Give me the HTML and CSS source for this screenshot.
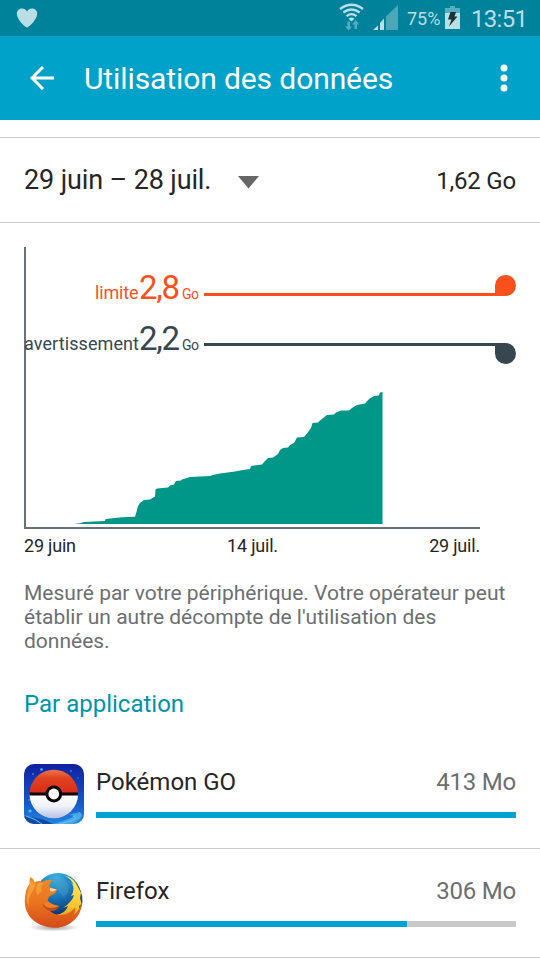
FILE: index.html
```html
<!DOCTYPE html>
<html lang="fr">
<head>
<meta charset="utf-8">
<title>Utilisation des données</title>
<link rel="stylesheet" href="styles.css">
</head>
<body>
<div class="status">
  <svg class="heart" width="22" height="20" viewBox="0 0 22 20"><path d="M11 19.500C9 19.500 .8 11.500 .8 5.800C.8-.5 9-.8 11 3.500C13-.8 21.200-.5 21.200 5.800C21.200 11.500 13 19.500 11 19.500Z"/></svg>
  <svg class="signals" width="62" height="36" viewBox="338 0 62 36">
    <g fill="none" stroke="#b9dfe5" stroke-width="2.200"><path d="M340 9Q351.500 .5 363 9"/><path d="M343.300 12.500Q351.500 6.500 359.700 12.500"/><path d="M346.500 16.200Q351.500 12 356.500 16.200"/></g>
    <path fill="#b9dfe5" d="M348.500 18.700Q351.500 16.500 354.500 18.700L351.500 21.500Z"/>
    <path fill="#54aebf" d="M347.500 21.500H350V26.500H352L348.700 30.500L345 26.500H347.500ZM354.500 29V24.500H352L355.700 20L359.300 24.500H357V29Z"/>
    <path fill="#b9dfe5" d="M373 30L378 25.500V30ZM380 30V23L384 18.500V30Z"/>
    <path fill="#4ca7b9" d="M386 30V16.500L398 5V30Z"/>
  </svg>
  <span class="percent">75%</span>
  <svg class="battery" width="15" height="24" viewBox="0 0 15 24"><path fill="#54aebf" d="M5 0H10V2H15V7H0V2H5Z"/><path fill="#b9dfe5" d="M0 7H15V23H0Z"/><path fill="#17343b" d="M5.500 6H11L9.500 10.500H12.500L4 20.500L6.500 13.500H3Z"/></svg>
  <span class="clock">13:51</span>
</div>
<header class="appbar">
  <svg class="back" width="24" height="24" viewBox="0 0 24 24"><path d="M24 12H2M13 1L2 12L13 23" fill="none" stroke="#fff" stroke-width="3"/></svg>
  <h1>Utilisation des données</h1>
  <svg class="more" width="8" height="28" viewBox="0 0 8 28"><g fill="#fff"><circle cx="4" cy="4" r="3.500"/><circle cx="4" cy="14" r="3.500"/><circle cx="4" cy="24" r="3.500"/></g></svg>
</header>
<main>
  <section class="cycle">
    <span class="range">29 juin – 28 juil.</span>
    <svg class="caret" width="22" height="13" viewBox="0 0 22 13"><path fill="#666" d="M0 0H21L10.500 12.500Z"/></svg>
    <span class="total">1,62 Go</span>
  </section>
  <section class="chart">
    <svg class="plot" width="516" height="288" viewBox="24 241 516 288">
      <path fill="#009688" d="M74 524L80 523.300L84 522L105 521L105.500 519L115 518L122 517.300L135 516.700L136.500 512L138 506L140 503L144 500L150 499.500L155 496.500L155.500 489.500L157 488.500L168 487.500L170 485.500L174 484.500L176 481L181 480.500L182 479.500L190 477L210 476L213 475L220 473.500L235 471.500L243 470L250 469L251 466L262 464.500L265 461L268 458L273 457.500L278 454L280 450L283 448L288 447.500L290 445L294 443L297 437.500L304 437L307 433.500L311 428L312.500 423L318 422.500L320 420.500L327 415L334 414.500L336 412.500L341 410.500L349 410.500L352 408L357 405L365 403.500L369 399L374 396L379 395.500L380 392.500L382.500 392V524Z"/>
      <path fill="#6b7275" d="M24 247H26V527H480V529H24Z"/>
      <g class="limit">
        <text x="95" y="299" class="sweep" textLength="43.500">limite</text><text x="139" y="299" class="amount" textLength="41">2,8</text><text x="182" y="299" class="unit" textLength="17">Go</text>
        <path d="M204 293H495V285.500A10.500 10.500 0 1 1 505.500 296H204Z"/>
      </g>
      <g class="warning">
        <text x="24" y="350" class="sweep" textLength="115">avertissement</text><text x="139" y="350" class="amount" textLength="41">2,2</text><text x="182" y="350" class="unit" textLength="17">Go</text>
        <path d="M204 343H505.500A10.500 10.500 0 1 1 495 353.500V346H204Z"/>
      </g>
    </svg>
    <div class="dates"><span>29 juin</span><span>14 juil.</span><span>29 juil.</span></div>
  </section>
  <p class="note">Mesuré par votre périphérique. Votre opérateur peut<br>établir un autre décompte de l'utilisation des<br>données.</p>
  <h2>Par application</h2>
  <article class="app">
    <svg width="60" height="60" viewBox="0 0 60 60">
      <defs>
        <linearGradient id="sky" x1="0" y1="0" x2="0" y2="1"><stop stop-color="#1020a0"/><stop offset=".6" stop-color="#1453c6"/><stop offset="1" stop-color="#2386df"/></linearGradient>
        <linearGradient id="red" x1="0" y1="0" x2="0" y2="1"><stop stop-color="#f07448"/><stop offset=".35" stop-color="#df4322"/><stop offset="1" stop-color="#d92a17"/></linearGradient>
        <linearGradient id="white" x1="0" y1="0" x2="0" y2="1"><stop stop-color="#fff"/><stop offset=".5" stop-color="#f1f2fb"/><stop offset="1" stop-color="#b8c0e6"/></linearGradient>
        <clipPath id="tile"><rect width="60" height="60" rx="10"/></clipPath>
      </defs>
      <g clip-path="url(#tile)">
        <rect width="60" height="60" fill="url(#sky)"/>
        <path fill="#1649a6" d="M0 52Q20 54 29 60H0Z"/><path fill="#48a8e8" d="M29 60Q40 57 47 54Q53 51 44 51L56 48Q62 53 48 60Z"/><path fill="none" stroke="#66c5ed" d="M35 60Q58 55 49 52M2 52Q12 55 18 60"/>
        <g fill="#55b9f1"><circle cx="17.500" cy="5.500" r="1.300"/><circle cx="9" cy="10" r=".8"/><circle cx="47" cy="7" r=".8"/><circle cx="6" cy="47" r="1.600"/><circle cx="54" cy="14" r=".6"/><circle cx="5" cy="36" r=".7"/></g>
        <path fill="url(#red)" d="M5.500 30A24.300 24.300 0 0 1 54.100 30Z"/>
        <path fill="url(#white)" d="M5.500 30A24.300 24.300 0 0 0 54.100 30Z"/>
        <path fill="#080808" d="M5.500 28.500H54V31.500H5.500Z"/><circle cx="29.800" cy="30" r="8.400" fill="#050505"/><circle cx="29.800" cy="30" r="5.400" fill="#fff"/>
      </g>
    </svg>
    <div class="info">
      <div class="line"><span>Pokémon GO</span><span class="size">413 Mo</span></div>
      <div class="bar"><div class="fill" style="width:100%"></div></div>
    </div>
  </article>
  <article class="app">
    <svg class="firefox" width="60" height="60" viewBox="0 0 60 60">
      <defs>
        <radialGradient id="globe" cx=".45" cy=".1" r=".85"><stop stop-color="#35b4e2"/><stop offset=".5" stop-color="#1878bb"/><stop offset="1" stop-color="#082f6b"/></radialGradient>
        <linearGradient id="fox" x1="0" y1="0" x2="0" y2="1"><stop stop-color="#ef8a24"/><stop offset=".5" stop-color="#ea7420"/><stop offset="1" stop-color="#d44a18"/></linearGradient>
        <linearGradient id="tail" x1="0" y1="0" x2="0" y2="1"><stop stop-color="#fff06a"/><stop offset=".6" stop-color="#fbc32c"/><stop offset="1" stop-color="#e36b1c"/></linearGradient>
        <radialGradient id="shadow"><stop stop-color="#777" stop-opacity=".7"/><stop offset="1" stop-color="#777" stop-opacity="0"/></radialGradient>
      </defs>
      <ellipse cx="30" cy="54.500" rx="25" ry="4" fill="url(#shadow)"/>
      <circle cx="34" cy="23" r="23" fill="url(#globe)"/>
      <path fill="#5f9cc4" opacity=".4" d="M28 4Q35 2 40 6L45 12L44 20L39 24L34 17Z"/>
      <path fill="#24517c" d="M49 7Q59 16 58.500 29Q58 35 54 41L52 20Z"/>
      <path fill="url(#tail)" d="M41 2.500Q50 5 54 14L57 20L56 25L57.500 31L55 33L55.500 38Q49 52 33 55L32 42Q42 40 44 33L39 35Q49 28 50 22L47 23Q52 16 47 9L50 12Q47 6 41 2.500Z"/>
      <path fill="url(#fox)" d="M6.500 4Q9 5 10.500 9Q14 7.500 19 8.500Q23 6 29 7Q25 10 25.500 14L33 16.500Q32 21 26 23Q23 26 24 30Q29 33 35 33Q33 38 26 38Q33 44 42 41Q48 39 51 34Q52 38 50 42Q56 37 57.500 29Q58 43 45 51Q32 58 17 52Q1 45 .7 28Q1 16 5.500 11Q5 7 6.500 4Z"/>
      <path fill="#f6ac42" opacity=".65" d="M7 7Q10 10 12 11Q9 18 6 23Q3 29 6 35Q0 27 4 18ZM14 10L20 10Q15 14 18 18L13 22Q11 16 14 10Z"/>
      <path fill="#c24a19" d="M24 29Q29 33 35 33Q33 38 26 38Q19 35 18 30Q20 33 25 34Q24 32 24 29Z"/>
      <path fill="#f08224" d="M24 28Q28 32 35 33Q31 35 26 35Q20 34 20 30Q22 31 24 28Z"/>
      <path fill="#f5d6b2" d="M26 15L33 16.500L29 18.500Q25 19 26 15Z"/>
    </svg>
    <div class="info">
      <div class="line"><span>Firefox</span><span class="size">306 Mo</span></div>
      <div class="bar"><div class="fill" style="width:74.100%"></div></div>
    </div>
  </article>
</main>
</body>
</html>
```
FILE: styles.css
```css
* { box-sizing: border-box; }
body { margin: 0; width: 540px; height: 960px; overflow: hidden; background: #fff; color: #252525; font-family: Roboto, sans-serif; }
svg { display: block; flex: none; }
h1, h2, p { margin: 0; font-weight: 400; }
.status { display: flex; height: 36px; background: #00829b; color: #b9dfe5; align-items: center; }
.heart { margin-left: 16px; fill: #b9dfe5; }
.signals { margin-left: 300px; }
.percent { width: 38px; margin-left: 7px; font-size: 18px; line-height: 36px; padding-top: 2px; }
.battery { margin: 0 0 1px; }
.clock { margin-left: 11px; font-size: 24px; letter-spacing: -.7px; line-height: 36px; padding-top: 2px; white-space: nowrap; }
.appbar { display: flex; align-items: center; height: 84px; padding: 0 32px 0 30px; background: #00a2ca; color: #fff; }
.appbar h1 { flex: 1; margin-left: 30px; padding-top: 2px; font-size: 30px; letter-spacing: -.1px; line-height: 40px; white-space: nowrap; }
.cycle { display: flex; align-items: center; height: 86px; margin-top: 17px; padding: 0 24px; border-top: 1px solid #ccc; border-bottom: 1px solid #ccc; }
.range { font-size: 27px; letter-spacing: -.13px; white-space: nowrap; width: 214px; }
.caret { margin-top: 4px; }
.total { margin-left: auto; padding-top: 2px; font-size: 24px; letter-spacing: -.2px; }
.chart { padding: 18px 0 0 24px; }
.limit { fill: #f8511d; }
.warning { fill: #37474f; }
.sweep { font-size: 18px; }
.amount { font-size: 33px; }
.unit { font-size: 14px; }
.dates { display: flex; justify-content: space-between; width: 456px; height: 34px; font-size: 18px; letter-spacing: -.2px; line-height: 34px; }
.note { margin: 18px 0 0 24px; color: #6b6f72; font-size: 21px; line-height: 24px; white-space: nowrap; }
h2 { margin: 37px 0 0 24px; color: #0093ad; font-size: 24px; line-height: 28px; }
.app { display: flex; gap: 12px; height: 109px; padding: 24px 24px 0; border-bottom: 1px solid #ccc; }
h2 + .app { margin-top: 22px; }
.firefox { overflow: visible; }
.info { flex: 1; padding-top: 3px; }
.line { display: flex; justify-content: space-between; height: 45px; font-size: 24px; line-height: 30px; }
.size { color: #6b6f72; letter-spacing: -.2px; }
.bar { height: 6px; background: #c8c8c8; }
.fill { height: 6px; background: #00a2d0; }
```
